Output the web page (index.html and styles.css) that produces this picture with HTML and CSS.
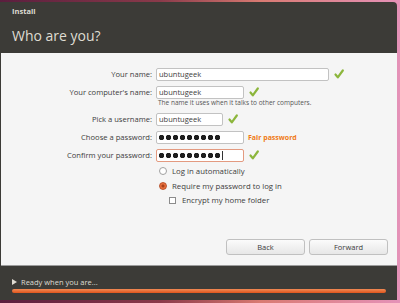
FILE: index.html
```html
<!doctype html>
<html>
<head>
<meta charset="utf-8">
<title>Install</title>
<link rel="stylesheet" href="styles.css">
</head>
<body>
<div class="window">
	<div class="head">
		<div class="app">Install</div>
		<h1>Who are you?</h1>
	</div>
	<div class="content">
		<div class="row">
			<label>Your name:</label>
			<div class="field w1">ubuntugeek</div>
			<svg class="ok" viewBox="0 0 10 10"><path d="M1.5 5.5 L3.8 8.3 L8.8 1.5" /></svg>
		</div>
		<div class="row">
			<label>Your computer's name:</label>
			<div class="field w2">ubuntugeek</div>
			<svg class="ok" viewBox="0 0 10 10"><path d="M1.5 5.5 L3.8 8.3 L8.8 1.5" /></svg>
		</div>
		<div class="hint">The name it uses when it talks to other computers.</div>
		<div class="row">
			<label>Pick a username:</label>
			<div class="field w3">ubuntugeek</div>
			<svg class="ok" viewBox="0 0 10 10"><path d="M1.5 5.5 L3.8 8.3 L8.8 1.5" /></svg>
		</div>
		<div class="row">
			<label>Choose a password:</label>
			<div class="field w2 pw"><span class="dots" aria-label="●●●●●●●●●"></span></div>
			<span class="fair">Fair password</span>
		</div>
		<div class="row">
			<label>Confirm your password:</label>
			<div class="field w2 pw focus"><span class="dots" aria-label="●●●●●●●●●"></span><span class="caret"></span></div>
			<svg class="ok" viewBox="0 0 10 10"><path d="M1.5 5.5 L3.8 8.3 L8.8 1.5" /></svg>
		</div>
		<div class="opt"><span class="radio"></span>Log in automatically</div>
		<div class="opt"><span class="radio on"></span>Require my password to log in</div>
		<div class="opt sub"><span class="check"></span>Encrypt my home folder</div>
		<div class="buttons">
			<a href="#" class="btn">Back</a>
			<a href="#" class="btn">Forward</a>
		</div>
	</div>
	<div class="foot">
		<div class="ready"><span class="tri"></span>Ready when you are...</div>
		<div class="bar"></div>
	</div>
</div>
</body>
</html>
```
FILE: styles.css
```css
*{ margin:0; padding:0; box-sizing:border-box;}
body{ width:400px; height:303px; overflow:hidden; background:linear-gradient(90deg,#5b1e3e 0%,#8a3a4a 40%,#d97a72 65%,#e592b8 100%); font-family:"Open Sans","Noto Sans",sans-serif; padding:2px 3px 3px 0;}
a{ text-decoration:none; color:#3c3c3c;}
.window{ height:298px; background:#3c3b37; border-radius:0 4px 0 0; display:flex; flex-direction:column;}
.head{ height:51px; padding:4px 0 0 12px; color:#dfdbd2;}
.app{ font-size:7.5px; font-weight:bold; height:12px;}
h1{ font-size:14px; font-weight:normal; margin-top:8px;}
.content{ height:213px; background:#f5f5f5; border-bottom:1px solid #9c9c9c; padding-top:12px; margin-left:1px; display:flex; flex-direction:column; font-size:7.5px; color:#3c3c3c;}
.row{ display:flex; align-items:center; height:18px;}
.row label{ width:155px; text-align:right; padding-right:4px; font-size:7.6px;}
.field{ height:13px; border:1px solid #c2c2c2; border-radius:2px; background:#fff; padding-left:2px; line-height:11px; font-size:7.5px;}
.w1{ width:173px;}
.w2{ width:88px;}
.w3{ width:67px;}
.pw{ display:flex; align-items:center; padding-left:1px;}
.dots{ width:63px; height:7px; background:radial-gradient(circle at 3.5px 3.5px,#1e1e1e 2.4px,transparent 3px) 0 0/7px 7px repeat-x;}
.focus{ border-color:#e39a80;}
.caret{ width:1px; height:9px; background:#333; margin-left:1px;}
.ok{ width:10px; height:10px; margin-left:5px; fill:none; stroke:#8cb63c; stroke-width:2.2; stroke-linecap:round; stroke-linejoin:round;}
.fair{ color:#f07a15; font-weight:bold; margin-left:4px; font-size:7px;}
.hint{ padding-left:157px; font-size:6.5px; color:#555; height:11px; line-height:8px; margin-top:-2px;}
.opt{ display:flex; align-items:center; height:14.5px; padding-left:158px; font-size:7.8px;}
.radio{ width:8px; height:8px; border:1px solid #a0a0a0; border-radius:50%; background:#fff; margin-right:5px;}
.radio.on{ background:radial-gradient(circle,#a7401c 0,#a7401c 1.3px,#e9703d 1.8px); border-color:#b9502a;}
.sub{ padding-left:168px;}
.check{ width:7px; height:7px; border:1px solid #8c8c8c; background:#fff; margin-right:6px;}
.buttons{ display:flex; justify-content:flex-end; gap:4px; margin-top:auto; margin-bottom:10px; padding-right:9px;}
.btn{ width:79px; height:16px; border:1px solid #c0c0c0; border-radius:3px; background:linear-gradient(#fbfbfb,#e7e7e7); text-align:center; line-height:14px; font-size:7.5px;}
.foot{ flex:1; padding:11px 11px 0 12px;}
.ready{ color:#dfdbd2; font-size:7.5px; display:flex; align-items:center; height:10px;}
.tri{ width:0; height:0; border-left:5px solid #dfdbd2; border-top:3px solid transparent; border-bottom:3px solid transparent; margin-right:4px;}
.bar{ height:4px; margin-top:2px; border-radius:2px; background:linear-gradient(#f08a55,#e0551c);}
```
